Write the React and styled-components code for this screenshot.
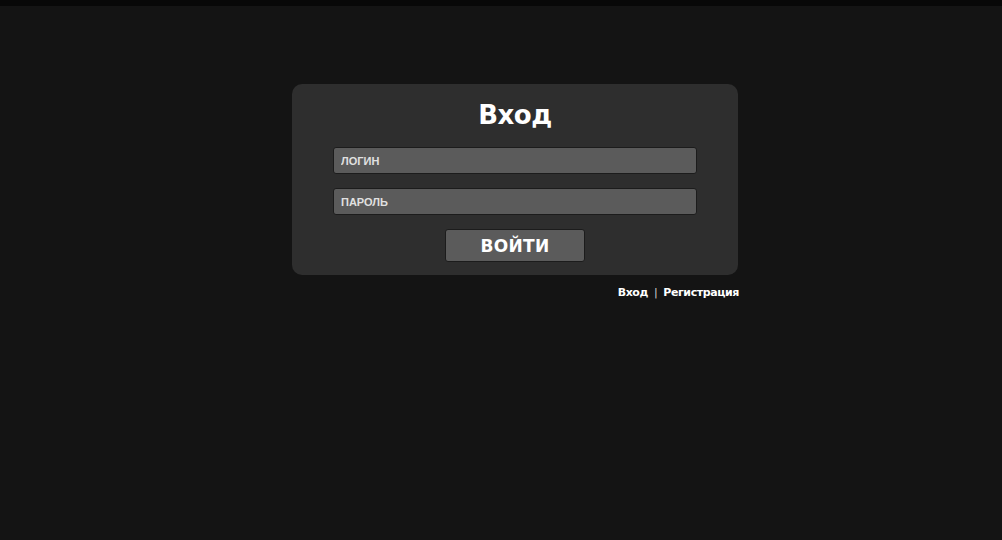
import React from "react";
import styled, { createGlobalStyle } from "styled-components";

const GlobalStyle = createGlobalStyle`
  html, body {
    margin: 0;
    padding: 0;
    background: #141414;
    height: 100%;
  }
  #root {
    min-height: 100vh;
  }
`;

const Page = styled.div`
  min-height: 540px;
  background: #141414;
  border-top: 6px solid #080808;
  box-sizing: border-box;
  font-family: "DejaVu Sans", "Liberation Sans", sans-serif;
`;

const Wrapper = styled.div`
  width: 446px;
  margin: 0 auto;
  padding-top: 78px;
  transform: translateX(14px);
`;

const Card = styled.form`
  background: #2e2e2e;
  border-radius: 10px;
  padding: 14px 0 13px;
  display: flex;
  flex-direction: column;
  align-items: center;
`;

const Title = styled.h1`
  margin: 0 0 15px;
  color: #ffffff;
  font-family: "DejaVu Sans", sans-serif;
  font-weight: 700;
  font-size: 26px;
  line-height: 34px;
  letter-spacing: -0.5px;
`;

const Input = styled.input`
  box-sizing: border-box;
  width: 364px;
  height: 27px;
  margin: 0 0 14px;
  padding: 0 7px;
  background: #5b5b5b;
  border: 1px solid #1c1c1c;
  border-radius: 3px;
  color: #e6e6e6;
  font-family: "Liberation Sans", Arial, sans-serif;
  font-weight: 700;
  font-size: 11px;
  outline: none;

  &::placeholder {
    color: #e0e0e0;
  }
`;

const Button = styled.button`
  box-sizing: border-box;
  width: 140px;
  height: 33px;
  margin-top: 0;
  background: #5b5b5b;
  border: 1px solid #1c1c1c;
  border-radius: 3px;
  color: #ffffff;
  font-family: "DejaVu Sans", sans-serif;
  font-weight: 700;
  font-size: 17px;
  letter-spacing: 0.3px;
  cursor: pointer;
`;

const Links = styled.div`
  display: flex;
  justify-content: flex-end;
  align-items: center;
  gap: 6px;
  margin-top: 11px;
  margin-right: -1px;
  color: #ffffff;
  font-family: "DejaVu Sans", sans-serif;
  font-weight: 700;
  font-size: 11px;
  letter-spacing: -0.4px;
`;

const LinkText = styled.a`
  color: #ffffff;
  text-decoration: none;
`;

const Divider = styled.span`
  font-weight: 400;
  color: #d0d0d0;
`;

export default function App() {
  return (
    <Page>
      <GlobalStyle />
      <Wrapper>
        <Card onSubmit={(e) => e.preventDefault()}>
          <Title>Вход</Title>
          <Input type="text" placeholder="ЛОГИН" />
          <Input type="password" placeholder="ПАРОЛЬ" />
          <Button type="submit">ВОЙТИ</Button>
        </Card>
        <Links>
          <LinkText href="#">Вход</LinkText>
          <Divider>|</Divider>
          <LinkText href="#">Регистрация</LinkText>
        </Links>
      </Wrapper>
    </Page>
  );
}
